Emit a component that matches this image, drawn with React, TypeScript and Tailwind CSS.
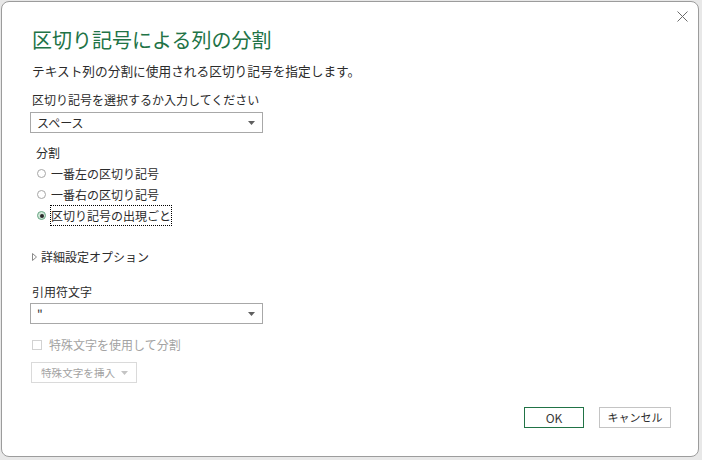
import React from 'react'

function Caret({ color = '#5f5f5f' }: { color?: string }) {
	return (
		<svg width="7" height="4" viewBox="0 0 7 4" className="shrink-0">
			<path d="M0 0 H7 L3.5 4 Z" fill={color} />
		</svg>
	)
}

function Select({ value }: { value: string }) {
	return (
		<div className="flex h-[21px] w-[233px] items-center justify-between border border-[#a8a8a8] bg-white pr-[7px] pl-[6px]">
			<span className="text-[12px] leading-[19px] text-[#2b2b2b]">{value}</span>
			<Caret />
		</div>
	)
}

function Radio({ label, checked, focused }: { label: string; checked?: boolean; focused?: boolean }) {
	return (
		<div className="flex h-[21px] items-center">
			{checked ? (
				<span className="flex h-[9px] w-[9px] items-center justify-center rounded-full border border-[#6aa884] bg-[#cfe6d8]">
					<span className="h-[4px] w-[4px] rounded-full bg-[#2b2b2b]" />
				</span>
			) : (
				<span className="h-[9px] w-[9px] rounded-full border border-[#a6a6a6] bg-white" />
			)}
			<span
				className={
					focused
						? 'ml-[4px] border border-dotted border-black py-[1px] text-[12px] leading-[17px] text-[#2b2b2b]'
						: 'ml-[5px] text-[12px] leading-[18px] text-[#2b2b2b]'
				}
			>
				{label}
			</span>
		</div>
	)
}

export default function App() {
	return (
		<div className="h-[460px] w-[702px] bg-[#e8e8e8] pt-[1px] pl-[1px] font-['Noto_Sans_CJK_JP',sans-serif]">
			<div className="relative flex h-[456px] w-[698px] flex-col rounded-[8px] border border-[#9c9c9c] bg-white pt-[24px] pr-[27px] pl-[28px]">
				<button className="absolute top-[8px] right-[10px] flex h-[12px] w-[12px] items-center justify-center">
					<svg width="11" height="11" viewBox="0 0 11 11">
						<path d="M0.5 0.5 L10.5 10.5 M10.5 0.5 L0.5 10.5" stroke="#6b6b6b" strokeWidth="1" />
					</svg>
				</button>

				<h1 className="ml-[2px] text-[20px] leading-[28px] font-normal text-[#217346]">
					区切り記号による列の分割
				</h1>

				<p className="mt-[8px] ml-[2px] text-[12.7px] leading-[18px] text-[#2b2b2b]">
					テキスト列の分割に使用される区切り記号を指定します。
				</p>

				<div className="mt-[11px] ml-[2px] text-[12px] leading-[18px] text-[#2b2b2b]">
					区切り記号を選択するか入力してください
				</div>
				<div className="mt-[3px]">
					<Select value="スペース" />
				</div>

				<div className="mt-[11px] ml-[6px] text-[12px] leading-[18px] text-[#2b2b2b]">分割</div>
				<div className="mt-[1px] ml-[7px] flex flex-col">
					<Radio label="一番左の区切り記号" />
					<Radio label="一番右の区切り記号" />
					<Radio label="区切り記号の出現ごと" checked focused />
				</div>

				<div className="mt-[22px] ml-[2px] flex items-center gap-[4px]">
					<svg width="5" height="8" viewBox="0 0 5 8">
						<path d="M0.5 0.5 L4.5 4 L0.5 7.5 Z" fill="none" stroke="#8a8a8a" strokeWidth="1" />
					</svg>
					<span className="text-[12px] leading-[18px] text-[#2b2b2b]">詳細設定オプション</span>
				</div>

				<div className="mt-[17px] ml-[2px] text-[12px] leading-[18px] text-[#2b2b2b]">引用符文字</div>
				<div className="mt-[2px]">
					<Select value={'"'} />
				</div>

				<div className="mt-[12px] ml-[2px] flex h-[18px] items-center gap-[7px]">
					<span className="h-[10px] w-[10px] border border-[#d2d2d2] bg-white" />
					<span className="text-[12px] leading-[18px] text-[#a3a3a3]">特殊文字を使用して分割</span>
				</div>

				<div className="mt-[8px] ml-[1px] flex h-[21px] w-[106px] items-center gap-[6px] border border-[#dadada] pl-[9px]">
					<span className="text-[10.6px] leading-[19px] text-[#a3a3a3]">特殊文字を挿入</span>
					<Caret color="#c4c4c4" />
				</div>

				<div className="mt-[24px] flex justify-end gap-[15px]">
					<button className="flex h-[21px] w-[60px] items-center justify-center border border-[#217346] bg-white text-[12px] text-[#3a3a3a]">
						OK
					</button>
					<button className="flex h-[21px] w-[72px] items-center justify-center border border-[#c4c4c4] bg-white text-[11px] text-[#2b2b2b]">
						キャンセル
					</button>
				</div>
			</div>
		</div>
	)
}
